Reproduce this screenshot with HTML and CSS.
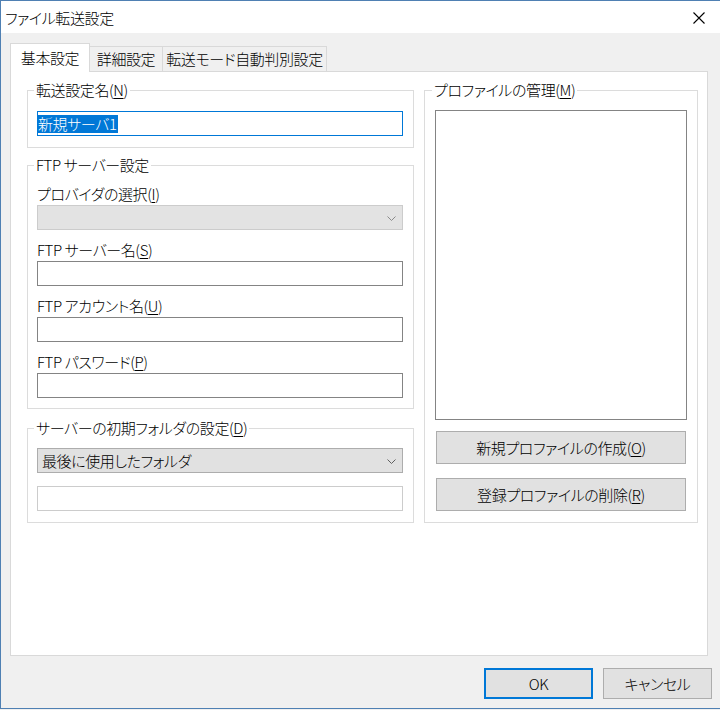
FILE: index.html
```html
<!DOCTYPE html>
<html lang="ja">
<head>
<meta charset="utf-8">
<title>ファイル転送設定</title>
<link rel="stylesheet" href="styles.css">
</head>
<body>
<div class="window">
  <div class="titlebar">
    <span class="title">ファイル転送設定</span>
    <svg class="close" width="12" height="12" viewBox="0 0 12 12"><path d="M0.5 0.5 L11.5 11.5 M11.5 0.5 L0.5 11.5" stroke="#000" stroke-width="1.1" fill="none"/></svg>
  </div>
  <div class="client">
    <div class="tabs">
      <div class="tab active">基本設定</div>
      <div class="tab tab2">詳細設定</div>
      <div class="tab tab3">転送モード自動判別設定</div>
    </div>
    <div class="panel">
      <div class="col-left">
        <fieldset class="group g1">
          <legend>転送設定名(<u>N</u>)</legend>
          <div class="textbox focused"><span class="sel">新規サーバ1</span></div>
        </fieldset>
        <fieldset class="group g2">
          <legend>FTP サーバー設定</legend>
          <div class="field">
            <div class="label">プロバイダの選択(<u>I</u>)</div>
            <div class="combo disabled"><span class="combo-text"></span><svg class="chev" width="10" height="6" viewBox="0 0 10 6"><polyline points="0.5,0.5 4.5,4.5 8.5,0.5" fill="none" stroke="#8a8a8a" stroke-width="1"/></svg></div>
          </div>
          <div class="field">
            <div class="label">FTP サーバー名(<u>S</u>)</div>
            <div class="textbox"></div>
          </div>
          <div class="field">
            <div class="label">FTP アカウント名(<u>U</u>)</div>
            <div class="textbox"></div>
          </div>
          <div class="field">
            <div class="label">FTP パスワード(<u>P</u>)</div>
            <div class="textbox"></div>
          </div>
        </fieldset>
        <fieldset class="group g3">
          <legend>サーバーの初期フォルダの設定(<u>D</u>)</legend>
          <div class="combo"><span class="combo-text">最後に使用したフォルダ</span><svg class="chev" width="10" height="6" viewBox="0 0 10 6"><polyline points="0.5,0.5 4.5,4.5 8.5,0.5" fill="none" stroke="#606060" stroke-width="1"/></svg></div>
          <div class="textbox disabled-box"></div>
        </fieldset>
      </div>
      <fieldset class="group g4">
        <legend>プロファイルの管理(<u>M</u>)</legend>
        <div class="listbox"></div>
        <div class="button btn-new">新規プロファイルの作成(<u>O</u>)</div>
        <div class="button btn-del">登録プロファイルの削除(<u>R</u>)</div>
      </fieldset>
    </div>
    <div class="footer">
      <div class="button dlg default">OK</div>
      <div class="button dlg">キャンセル</div>
    </div>
  </div>
</div>
</body>
</html>
```
FILE: styles.css
```css
* { box-sizing: border-box; }
html, body { margin: 0; padding: 0; background: #f0f0f0; }
body {
  font-family: "Noto Sans CJK JP", "Noto Sans", sans-serif;
  font-size: 15px;
  font-weight: 300;
  letter-spacing: -0.4px;
  font-feature-settings: "palt";
  color: #000;
}
u { text-decoration: underline; text-underline-offset: 2px; text-decoration-thickness: 1px; }

.window {
  width: 720px;
  height: 709px;
  border-top: 1px solid #4f80b3;
  border-left: 1px solid #4f80b3;
  border-bottom: 1px solid #4f80b3;
  background: #f0f0f0;
  display: flex;
  flex-direction: column;
}

.titlebar {
  height: 32px;
  background: #fff;
  display: flex;
  align-items: center;
  justify-content: space-between;
  padding: 0 15px 0 4px;
}
.title { line-height: 20px; padding-top: 1px; }
.close { display: block; margin-top: 2px; }

.client {
  flex: 1;
  padding: 10px 0 0 9px;
}

.tabs {
  display: flex;
  align-items: flex-end;
  height: 28px;
}
.tab {
  border: 1px solid #d9d9d9;
  border-bottom: none;
  background: #f0f0f0;
  height: 25px;
  line-height: 23px;
  text-align: center;
  margin-left: -1px;
}
.tab.active {
  margin-left: 0;
  width: 80px;
  height: 29px;
  line-height: 28px;
  margin-bottom: -1px;
  background: #fff;
  position: relative;
  z-index: 1;
}
.tab2 { width: 74px; }
.tab3 { width: 165px; }

.panel {
  width: 698px;
  height: 585px;
  background: #fff;
  border: 1px solid #d9d9d9;
  padding: 8px 9px 0 16px;
  display: flex;
  align-items: flex-start;
  gap: 10px;
}

.col-left {
  width: 387px;
  display: flex;
  flex-direction: column;
}

.group {
  margin: 0;
  border: 1px solid #dcdcdc;
  min-width: 0;
  padding: 0 10px 0 9px;
}
.group legend {
  line-height: 20px;
  height: 20px;
  padding: 0 2px;
  margin-left: -3px;
}

.g1 { padding-top: 11px; padding-bottom: 11px; }
.g2 { margin-top: 7px; padding-top: 9px; padding-bottom: 10px; }
.g3 { margin-top: 9px; padding-top: 10px; padding-bottom: 11px; }
.g4 {
  width: 274px;
  height: 443px;
  padding: 10px 10px 11px 10px;
}

.field { margin-bottom: 10px; }
.field:last-child { margin-bottom: 0; }
.label {
  line-height: 20px;
  height: 20px;
  margin-bottom: 1px;
  white-space: nowrap;
}

.textbox {
  height: 25px;
  background: #fff;
  border: 1px solid #848484;
  display: flex;
  align-items: center;
}
.textbox.focused { border-color: #0078d7; }
.textbox.disabled-box { border-color: #cccccc; margin-top: 13px; }
.sel {
  display: inline-block;
  background: #0078d7;
  color: #fff;
  line-height: 18px;
  height: 18px;
  padding: 0 1px 0 0;
}

.combo {
  height: 25px;
  background: #e1e1e1;
  border: 1px solid #adadad;
  display: flex;
  align-items: center;
  justify-content: space-between;
  padding: 0 5px 0 4px;
}
.combo.disabled {
  background: #e3e3e3;
  border-color: #cccccc;
}
.combo-text { line-height: 20px; }
.chev { display: block; margin-top: 2px; }

.listbox {
  height: 310px;
  background: #fff;
  border: 1px solid #848484;
}

.button {
  background: #e1e1e1;
  border: 1px solid #adadad;
  display: flex;
  align-items: center;
  justify-content: center;
  line-height: 20px;
}
.btn-new { height: 33px; margin: 11px 1px 0 1px; }
.btn-del { height: 33px; margin: 14px 1px 0 1px; }

.footer {
  display: flex;
  justify-content: flex-end;
  gap: 10px;
  padding-right: 8px;
  margin-top: 12px;
}
.dlg { width: 109px; height: 31px; }
.dlg.default { border: 2px solid #0078d7; }
```
